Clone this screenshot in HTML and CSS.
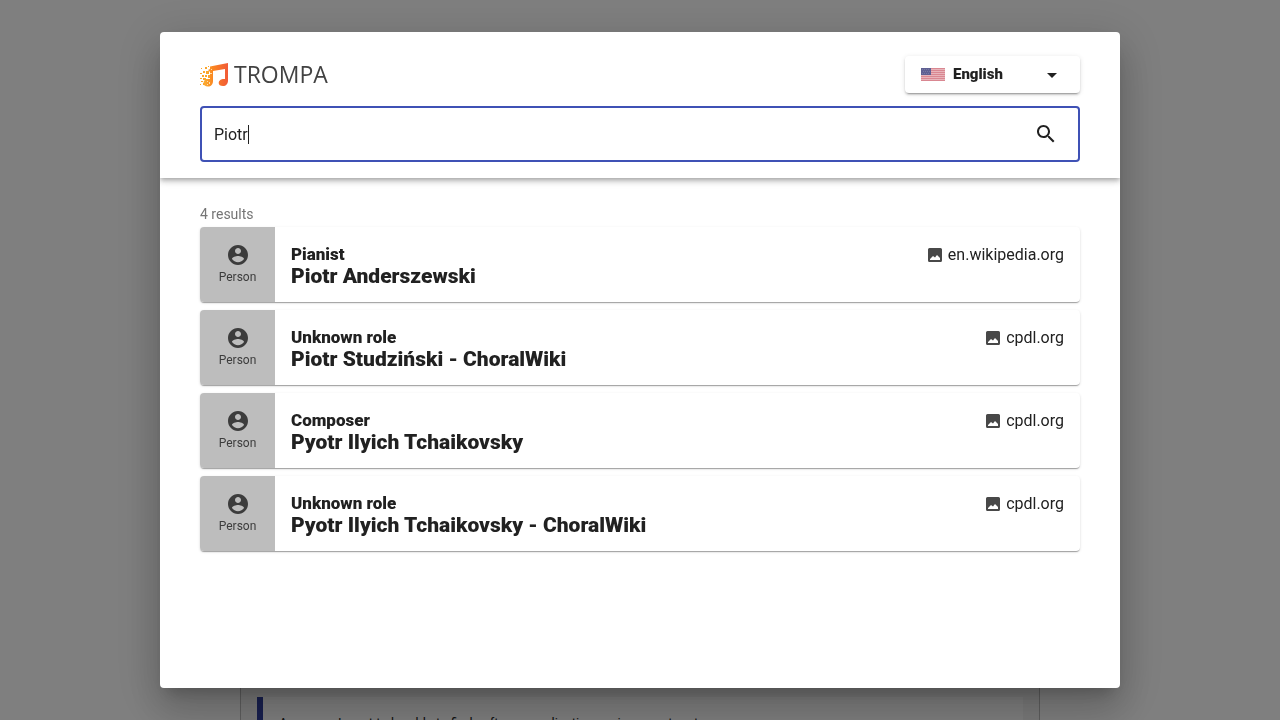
FILE: index.html
```html
<!DOCTYPE html>
<html lang="en">
<head>
<meta charset="utf-8">
<meta name="viewport" content="width=device-width, initial-scale=1">
<title>TROMPA search</title>
<link rel="stylesheet" href="styles.css">
</head>
<body>
<svg class="sprite" aria-hidden="true">
  <symbol id="person" viewBox="0 0 24 24"><path d="M12 2C6.48 2 2 6.48 2 12s4.48 10 10 10 10-4.48 10-10S17.52 2 12 2zm0 3c1.66 0 3 1.34 3 3s-1.34 3-3 3-3-1.34-3-3 1.34-3 3-3zm0 14.2c-2.5 0-4.71-1.28-6-3.22.03-1.99 4-3.08 6-3.08 1.99 0 5.97 1.09 6 3.08-1.29 1.94-3.5 3.22-6 3.22z"/></symbol>
  <symbol id="image" viewBox="0 0 14 14"><path fill-rule="evenodd" d="M1.500 0h11Q14 0 14 1.500v11Q14 14 12.500 14h-11Q0 14 0 12.500v-11Q0 0 1.500 0zM2 12h10V10L11 9 9 7 7 9.500 5 8 2 11z"/></symbol>
</svg>
<main class="page">
  <div class="page-box">
    <blockquote class="quote">As a user, I want to be able to find software applications using smart meters</blockquote>
  </div>
</main>
<div class="backdrop">
  <div class="dialog" role="dialog" aria-modal="true" aria-label="Search">
    <header class="header">
      <div class="topbar">
        <div class="logo">
          <svg class="logo-mark" viewBox="0 0 28 24" aria-hidden="true">
            <defs><linearGradient id="flame"><stop offset="0" stop-color="#fbb034"/><stop offset=".4" stop-color="#fa8420"/><stop offset="1" stop-color="#f15a38"/></linearGradient></defs>
            <g fill="url(#flame)">
              <path d="M10 3.500 28 0v17.500c0 3.500-2 5.500-5 5.500-2.700 0-4.300-1-4.300-3 0-3 3.300-4.500 6.300-4V6L13 8v10c0 3.500-2 5.500-5 5.500S3.500 22 3.500 20c0-3 2.500-4.500 6.500-4V9L8 7l2-1z"/>
            </g>
            <g fill="#fba52b">
              <path d="M5 4h2v2H5zM1 5h1v1H1zM8 3h1v1H8zM3 8h2v2H3zM0 10h2v1H0zM6 8h3v3H6zM2 12h2v2H2zM5 12h2v2H5zM8 12h2v3H8zM0 15h2v1H0zM3 15h3v2H3zM1 18h2v1H1zM3 20h2v2H3zM0 21h1v1H0zM6 16h2v1H6z"/>
            </g>
            <path d="M11 6h1v1h-1zM10 10h2v1h-2zM7 18h1v1H7zM9 19h1v2H9zM7 21h1v1H7z" fill="#ffe0a8"/>
          </svg>
          <span class="logo-text">TROMPA</span>
        </div>
        <label class="language">
          <svg class="flag" viewBox="0 0 24 13" aria-hidden="true">
            <path fill="#e8b4ba" d="M0 0h24v13H0z"/>
            <path fill="#d98791" d="M0 0h24v1H0zM0 2h24v1H0zM0 4h24v1H0zM0 6h24v1H0zM0 8h24v1H0zM0 10h24v1H0zM0 12h24v1H0z"/>
            <path fill="#5f6093" d="M0 0h10v7H0z"/>
            <path stroke="#7778a3" stroke-dasharray="1 1" d="M1 1.500h8M2 3.500h7M1 5.500h8"/>
          </svg>
          <select class="language-select" aria-label="Language"><option>English</option></select>
          <svg class="arrow" viewBox="0 0 24 24" aria-hidden="true"><path d="M7 10l5 5 5-5z"/></svg>
        </label>
      </div>
      <div class="search">
        <input class="search-input" type="text" value="Piotr" aria-label="Search">
        <span class="caret"></span>
        <button class="search-button" type="button" aria-label="Search">
          <svg viewBox="0 0 24 24"><path d="M15.500 14h-.79l-.28-.27C15.410 12.590 16 11.110 16 9.500 16 5.910 13.090 3 9.500 3S3 5.910 3 9.500 5.910 16 9.500 16c1.610 0 3.090-.59 4.230-1.570l.27.28v.79l5 4.990L20.490 19l-4.990-5zm-6 0C7.010 14 5 11.990 5 9.500S7.010 5 9.500 5 14 7.010 14 9.500 11.990 14 9.500 14z"/></svg>
        </button>
      </div>
    </header>
    <section class="results">
      <p class="count">4 results</p>
      <ul class="list">
        <li class="card">
          <div class="kind"><svg><use href="#person"/></svg><span>Person</span></div>
          <div class="info"><p class="role">Pianist</p><h2 class="name">Piotr Anderszewski</h2></div>
          <div class="source"><svg><use href="#image"/></svg><span>en.wikipedia.org</span></div>
        </li>
        <li class="card">
          <div class="kind"><svg><use href="#person"/></svg><span>Person</span></div>
          <div class="info"><p class="role">Unknown role</p><h2 class="name">Piotr Studziński - ChoralWiki</h2></div>
          <div class="source"><svg><use href="#image"/></svg><span>cpdl.org</span></div>
        </li>
        <li class="card">
          <div class="kind"><svg><use href="#person"/></svg><span>Person</span></div>
          <div class="info"><p class="role">Composer</p><h2 class="name">Pyotr Ilyich Tchaikovsky</h2></div>
          <div class="source"><svg><use href="#image"/></svg><span>cpdl.org</span></div>
        </li>
        <li class="card">
          <div class="kind"><svg><use href="#person"/></svg><span>Person</span></div>
          <div class="info"><p class="role">Unknown role</p><h2 class="name">Pyotr Ilyich Tchaikovsky - ChoralWiki</h2></div>
          <div class="source"><svg><use href="#image"/></svg><span>cpdl.org</span></div>
        </li>
      </ul>
    </section>
  </div>
</div>
</body>
</html>
```
FILE: styles.css
```css
* { box-sizing: border-box; }
body {
  margin: 0;
  font: 16px/24px Roboto, sans-serif;
  color: #212121;
  background: #fff;
}
p, h2, ul { margin: 0; padding: 0; }
svg { display: block; fill: currentColor; flex: none; }
.sprite { display: none; }

.page {
  height: 100vh;
  overflow: hidden;
  display: flex;
  flex-direction: column;
  align-items: center;
  justify-content: flex-end;
}
.page-box {
  width: 100%;
  max-width: 800px;
  height: 160px;
  margin-bottom: -120px;
  padding: 16px;
  border: 1px solid #bdbdbd;
  background: #f5f5f5;
}
.quote {
  margin: 0;
  padding: 16px;
  border-left: 6px solid #303f9f;
  background: #fff;
  font-size: 13px;
  line-height: 20px;
}

.backdrop {
  position: fixed;
  inset: 0;
  display: flex;
  justify-content: center;
  padding: 32px;
  background: rgba(0, 0, 0, .5);
}
.dialog {
  width: 100%;
  max-width: 960px;
  overflow: hidden;
  border-radius: 4px;
  background: #fff;
  box-shadow: 0 11px 15px -7px rgba(0, 0, 0, .2), 0 24px 38px 3px rgba(0, 0, 0, .14), 0 9px 46px 8px rgba(0, 0, 0, .12);
}
.header {
  padding: 24px 40px 16px;
  box-shadow: 0 2px 4px -1px rgba(0, 0, 0, .2), 0 4px 5px rgba(0, 0, 0, .14), 0 1px 10px rgba(0, 0, 0, .12);
}
.topbar {
  display: flex;
  align-items: center;
  justify-content: space-between;
  margin-bottom: 13px;
}
.logo { display: flex; align-items: center; gap: 6px; }
.logo-mark { width: 28px; height: 24px; }
.logo-text { padding-bottom: 2px; font: 23px/32px "Open Sans", sans-serif; color: #424242; }
.language {
  display: flex;
  align-items: center;
  width: 175px;
  height: 37px;
  padding: 0 16px;
  border-radius: 4px;
  box-shadow: 0 3px 1px -2px rgba(0, 0, 0, .2), 0 2px 2px rgba(0, 0, 0, .14), 0 1px 5px rgba(0, 0, 0, .12);
}
.flag { width: 24px; height: 13px; margin-right: 8px; }
.language-select {
  flex: 1;
  min-width: 0;
  padding: 0 0 2px;
  border: 0;
  appearance: none;
  background: none;
  font: 900 15px/20px Roboto, sans-serif;
  color: inherit;
}
.arrow { width: 24px; height: 24px; }
.search {
  display: flex;
  align-items: center;
  height: 56px;
  padding: 0 20px 0 12px;
  border: 2px solid #3f51b5;
  border-radius: 4px;
}
.search-input {
  field-sizing: content;
  min-width: 0;
  padding: 2px 0 0;
  border: 0;
  outline: 0;
  background: none;
  font: inherit;
  color: inherit;
}
.caret { width: 1px; height: 19px; background: #212121; }
.search-button { margin-left: auto; padding: 0; border: 0; background: none; color: inherit; }
.search-button svg { width: 24px; height: 24px; }

.results { padding: 26px 40px; }
.count {
  margin-bottom: 3px;
  font-size: 14px;
  line-height: 20px;
  color: #757575;
}
.list { display: grid; gap: 8px; list-style: none; }
.card {
  display: flex;
  height: 75px;
  overflow: hidden;
  border-radius: 4px;
  box-shadow: 0 2px 1px -1px rgba(0, 0, 0, .2), 0 1px 1px rgba(0, 0, 0, .14), 0 1px 3px rgba(0, 0, 0, .12);
}
.kind {
  display: flex;
  flex-direction: column;
  align-items: center;
  width: 75px;
  padding-top: 16px;
  background: #bdbdbd;
  color: #3c3c3c;
  font-size: 12px;
  line-height: 20px;
}
.kind svg { width: 24px; height: 24px; }
.info { flex: 1; min-width: 0; padding: 16px; }
.role { font-size: 17px; font-weight: 900; line-height: 22px; }
.name { font-size: 21px; font-weight: 900; line-height: 22px; }
.source { display: flex; align-items: center; gap: 6px; height: 24px; margin: 16px 16px 0 0; }
.source svg { width: 14px; height: 14px; color: #484848; }
```
